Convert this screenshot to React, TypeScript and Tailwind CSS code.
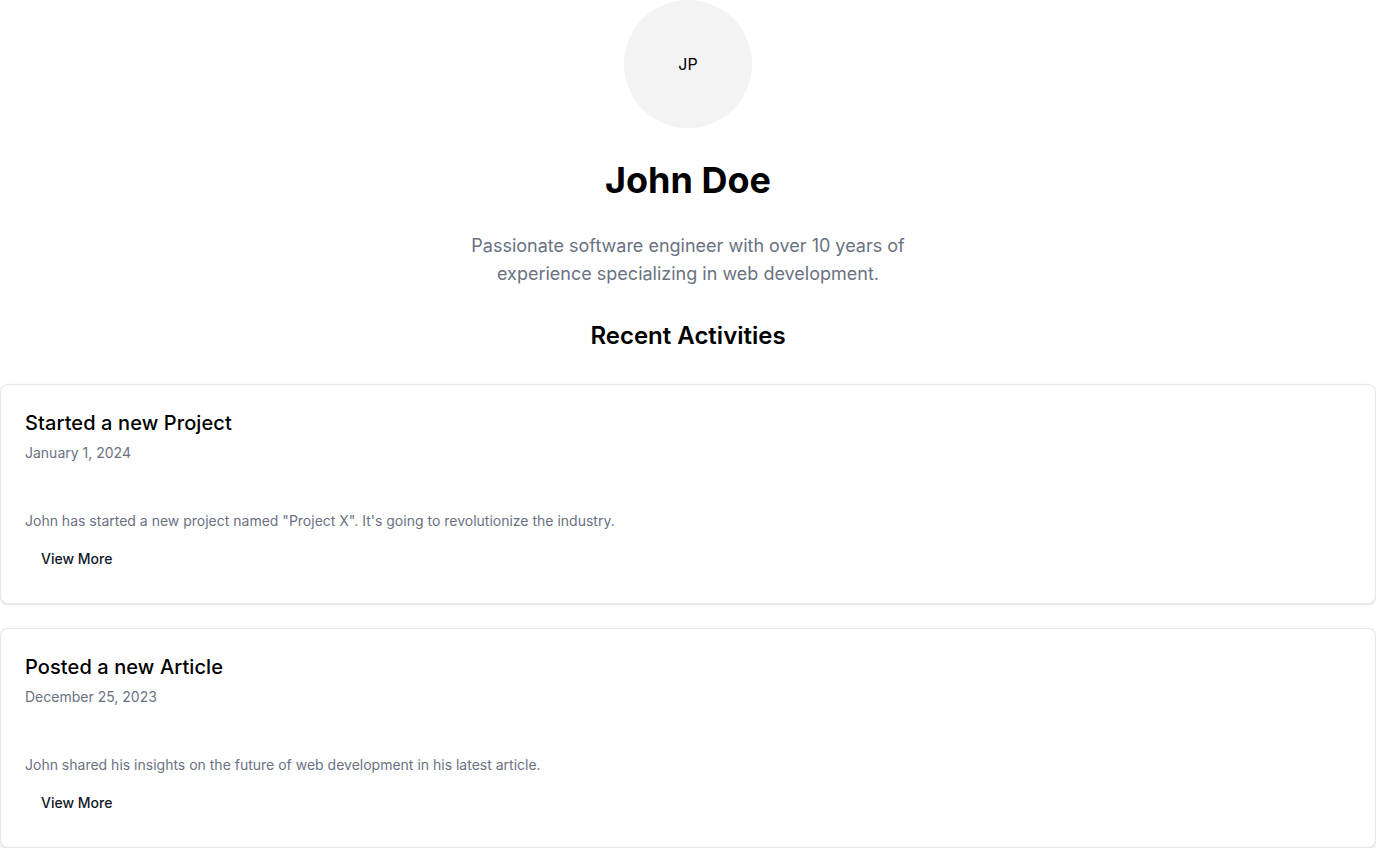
const activities = [
  {
    title: "Started a new Project",
    date: "January 1, 2024",
    text: 'John has started a new project named "Project X". It\'s going to revolutionize the industry.',
  },
  {
    title: "Posted a new Article",
    date: "December 25, 2023",
    text: "John shared his insights on the future of web development in his latest article.",
  },
];

export default function App() {
  return (
    <div className="min-h-screen bg-white text-black" style={{ fontFamily: "Inter, 'Noto Sans', sans-serif" }}>
      <div className="flex flex-col items-center">
        {/* Avatar */}
        <div className="w-32 h-32 rounded-full bg-[#f3f3f3] flex items-center justify-center text-base">
          JP
        </div>
        <h1 className="mt-8 text-4xl leading-10 font-bold">John Doe</h1>
        <p className="mt-8 max-w-md text-center text-lg leading-7 text-gray-500">
          Passionate software engineer with over 10 years of experience specializing in web development.
        </p>
        <h2 className="mt-8 text-2xl leading-8 font-semibold">Recent Activities</h2>
      </div>

      {/* Activities */}
      <div className="mt-8 flex flex-col gap-6">
        {activities.map((a) => (
          <div key={a.title} className="rounded-lg border border-gray-200 bg-white shadow-sm">
            <div className="p-6 flex flex-col gap-1.5">
              <h3 className="text-xl leading-7 font-medium tracking-[0.1px]">{a.title}</h3>
              <p className="text-sm leading-5 text-gray-500">{a.date}</p>
            </div>
            <div className="p-6">
              <p className="text-sm leading-5 text-gray-500">{a.text}</p>
              <button className="mt-2 h-10 px-4 rounded-md text-sm font-medium text-gray-900 hover:bg-gray-100">View More</button>
            </div>
          </div>
        ))}
      </div>
    </div>
  );
}
